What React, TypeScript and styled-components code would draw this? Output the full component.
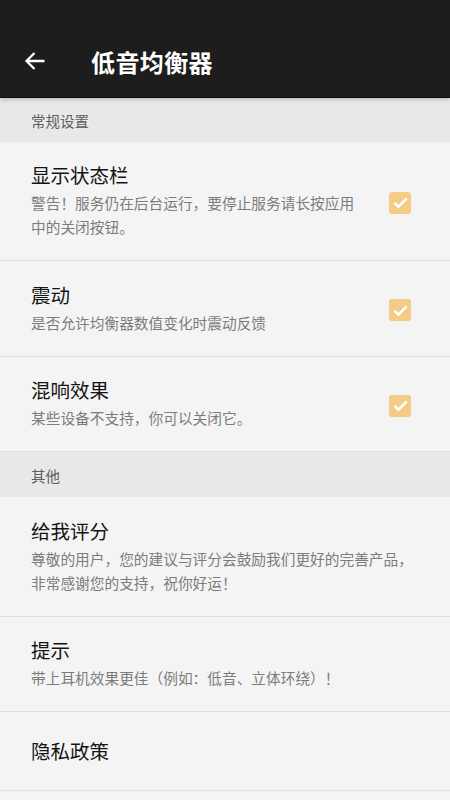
import React from 'react';
import styled, { createGlobalStyle } from 'styled-components';

const GlobalStyle = createGlobalStyle`
  html, body {
    margin: 0;
    padding: 0;
    background: #f4f4f4;
  }
  body {
    font-family: Roboto, "Noto Sans CJK SC", "Noto Sans", sans-serif;
  }
`;

const Page = styled.div`
  width: 450px;
  min-height: 800px;
  background: #f4f4f4;
  display: flex;
  flex-direction: column;
`;

const AppBar = styled.header`
  height: 97px;
  background: #1d1d1d;
  display: flex;
  align-items: flex-end;
  box-shadow: 0 1px 0 #0a0a0a, 0 3px 4px rgba(0, 0, 0, 0.18);
  position: relative;
  z-index: 1;
`;

const Toolbar = styled.div`
  height: 72px;
  width: 100%;
  display: flex;
  align-items: center;
  box-sizing: border-box;
`;

const BackButton = styled.button`
  width: 70px;
  height: 56px;
  border: none;
  background: none;
  padding: 0 0 0 23px;
  display: flex;
  align-items: center;
  cursor: pointer;
`;

const Title = styled.h1`
  margin: 0 0 0 21px;
  color: #ffffff;
  font-size: 24px;
  font-weight: 700;
  letter-spacing: 0.4px;
`;

const SectionHeader = styled.div`
  height: 45px;
  background: #e8e8e8;
  display: flex;
  align-items: center;
  padding-left: 31px;
  padding-top: 2px;
  box-sizing: border-box;
  font-size: 14.5px;
  color: #5e5e5e;
`;

const Row = styled.div<{ $minHeight?: number; $hasCheck?: boolean }>`
  display: flex;
  align-items: center;
  min-height: ${(p) => p.$minHeight ?? 0}px;
  padding: 23.4px ${(p) => (p.$hasCheck ? 39 : 30)}px 20px 31px;
  box-sizing: border-box;
  border-bottom: 1px solid #e0e0e0;
  gap: 24px;
`;

const TextBlock = styled.div`
  flex: 1;
  display: flex;
  flex-direction: column;
`;

const ItemTitle = styled.div`
  font-size: 19.5px;
  line-height: 24px;
  color: #141414;
`;

const ItemDesc = styled.div`
  margin-top: 3px;
  font-size: 14.7px;
  line-height: 24px;
  color: #7c7c7c;
`;

const CheckBox = styled.span`
  width: 22px;
  height: 22px;
  border-radius: 3px;
  background: #f3cc86;
  display: flex;
  align-items: center;
  justify-content: center;
  flex-shrink: 0;
`;

interface ISettingProps {
  title: string;
  desc?: string;
  checked?: boolean;
  minHeight?: number;
}

const Check: React.FC = () => (
  <CheckBox>
    <svg width="17" height="17" viewBox="0 0 16 16">
      <path d="M2.3 8.3 L6.1 12 L13.8 4.2" fill="none" stroke="#ffffff" strokeWidth="2.4" />
    </svg>
  </CheckBox>
);

const Setting: React.FC<ISettingProps> = ({ title, desc, checked, minHeight }) => (
  <Row $minHeight={minHeight} $hasCheck={checked}>
    <TextBlock>
      <ItemTitle>{title}</ItemTitle>
      {desc && <ItemDesc>{desc}</ItemDesc>}
    </TextBlock>
    {checked && <Check />}
  </Row>
);

const App: React.FC = () => {
  return (
    <Page>
      <GlobalStyle />
      <AppBar>
        <Toolbar>
          <BackButton aria-label="back">
            <svg width="24" height="24" viewBox="0 0 24 24">
              <path
                d="M21.5 12 H3.5 M11.5 4 L3.5 12 L11.5 20"
                fill="none"
                stroke="#ffffff"
                strokeWidth="2.3"
              />
            </svg>
          </BackButton>
          <Title>低音均衡器</Title>
        </Toolbar>
      </AppBar>
      <SectionHeader>常规设置</SectionHeader>
      <Setting
        title="显示状态栏"
        desc="警告！服务仍在后台运行，要停止服务请长按应用中的关闭按钮。"
        checked
      />
      <Setting title="震动" desc="是否允许均衡器数值变化时震动反馈" checked />
      <Setting title="混响效果" desc="某些设备不支持，你可以关闭它。" checked />
      <SectionHeader>其他</SectionHeader>
      <Setting
        title="给我评分"
        desc="尊敬的用户，您的建议与评分会鼓励我们更好的完善产品，非常感谢您的支持，祝你好运！"
      />
      <Setting title="提示" desc="带上耳机效果更佳（例如：低音、立体环绕）！" />
      <Setting title="隐私政策" minHeight={79} />
    </Page>
  );
};

export default App;
